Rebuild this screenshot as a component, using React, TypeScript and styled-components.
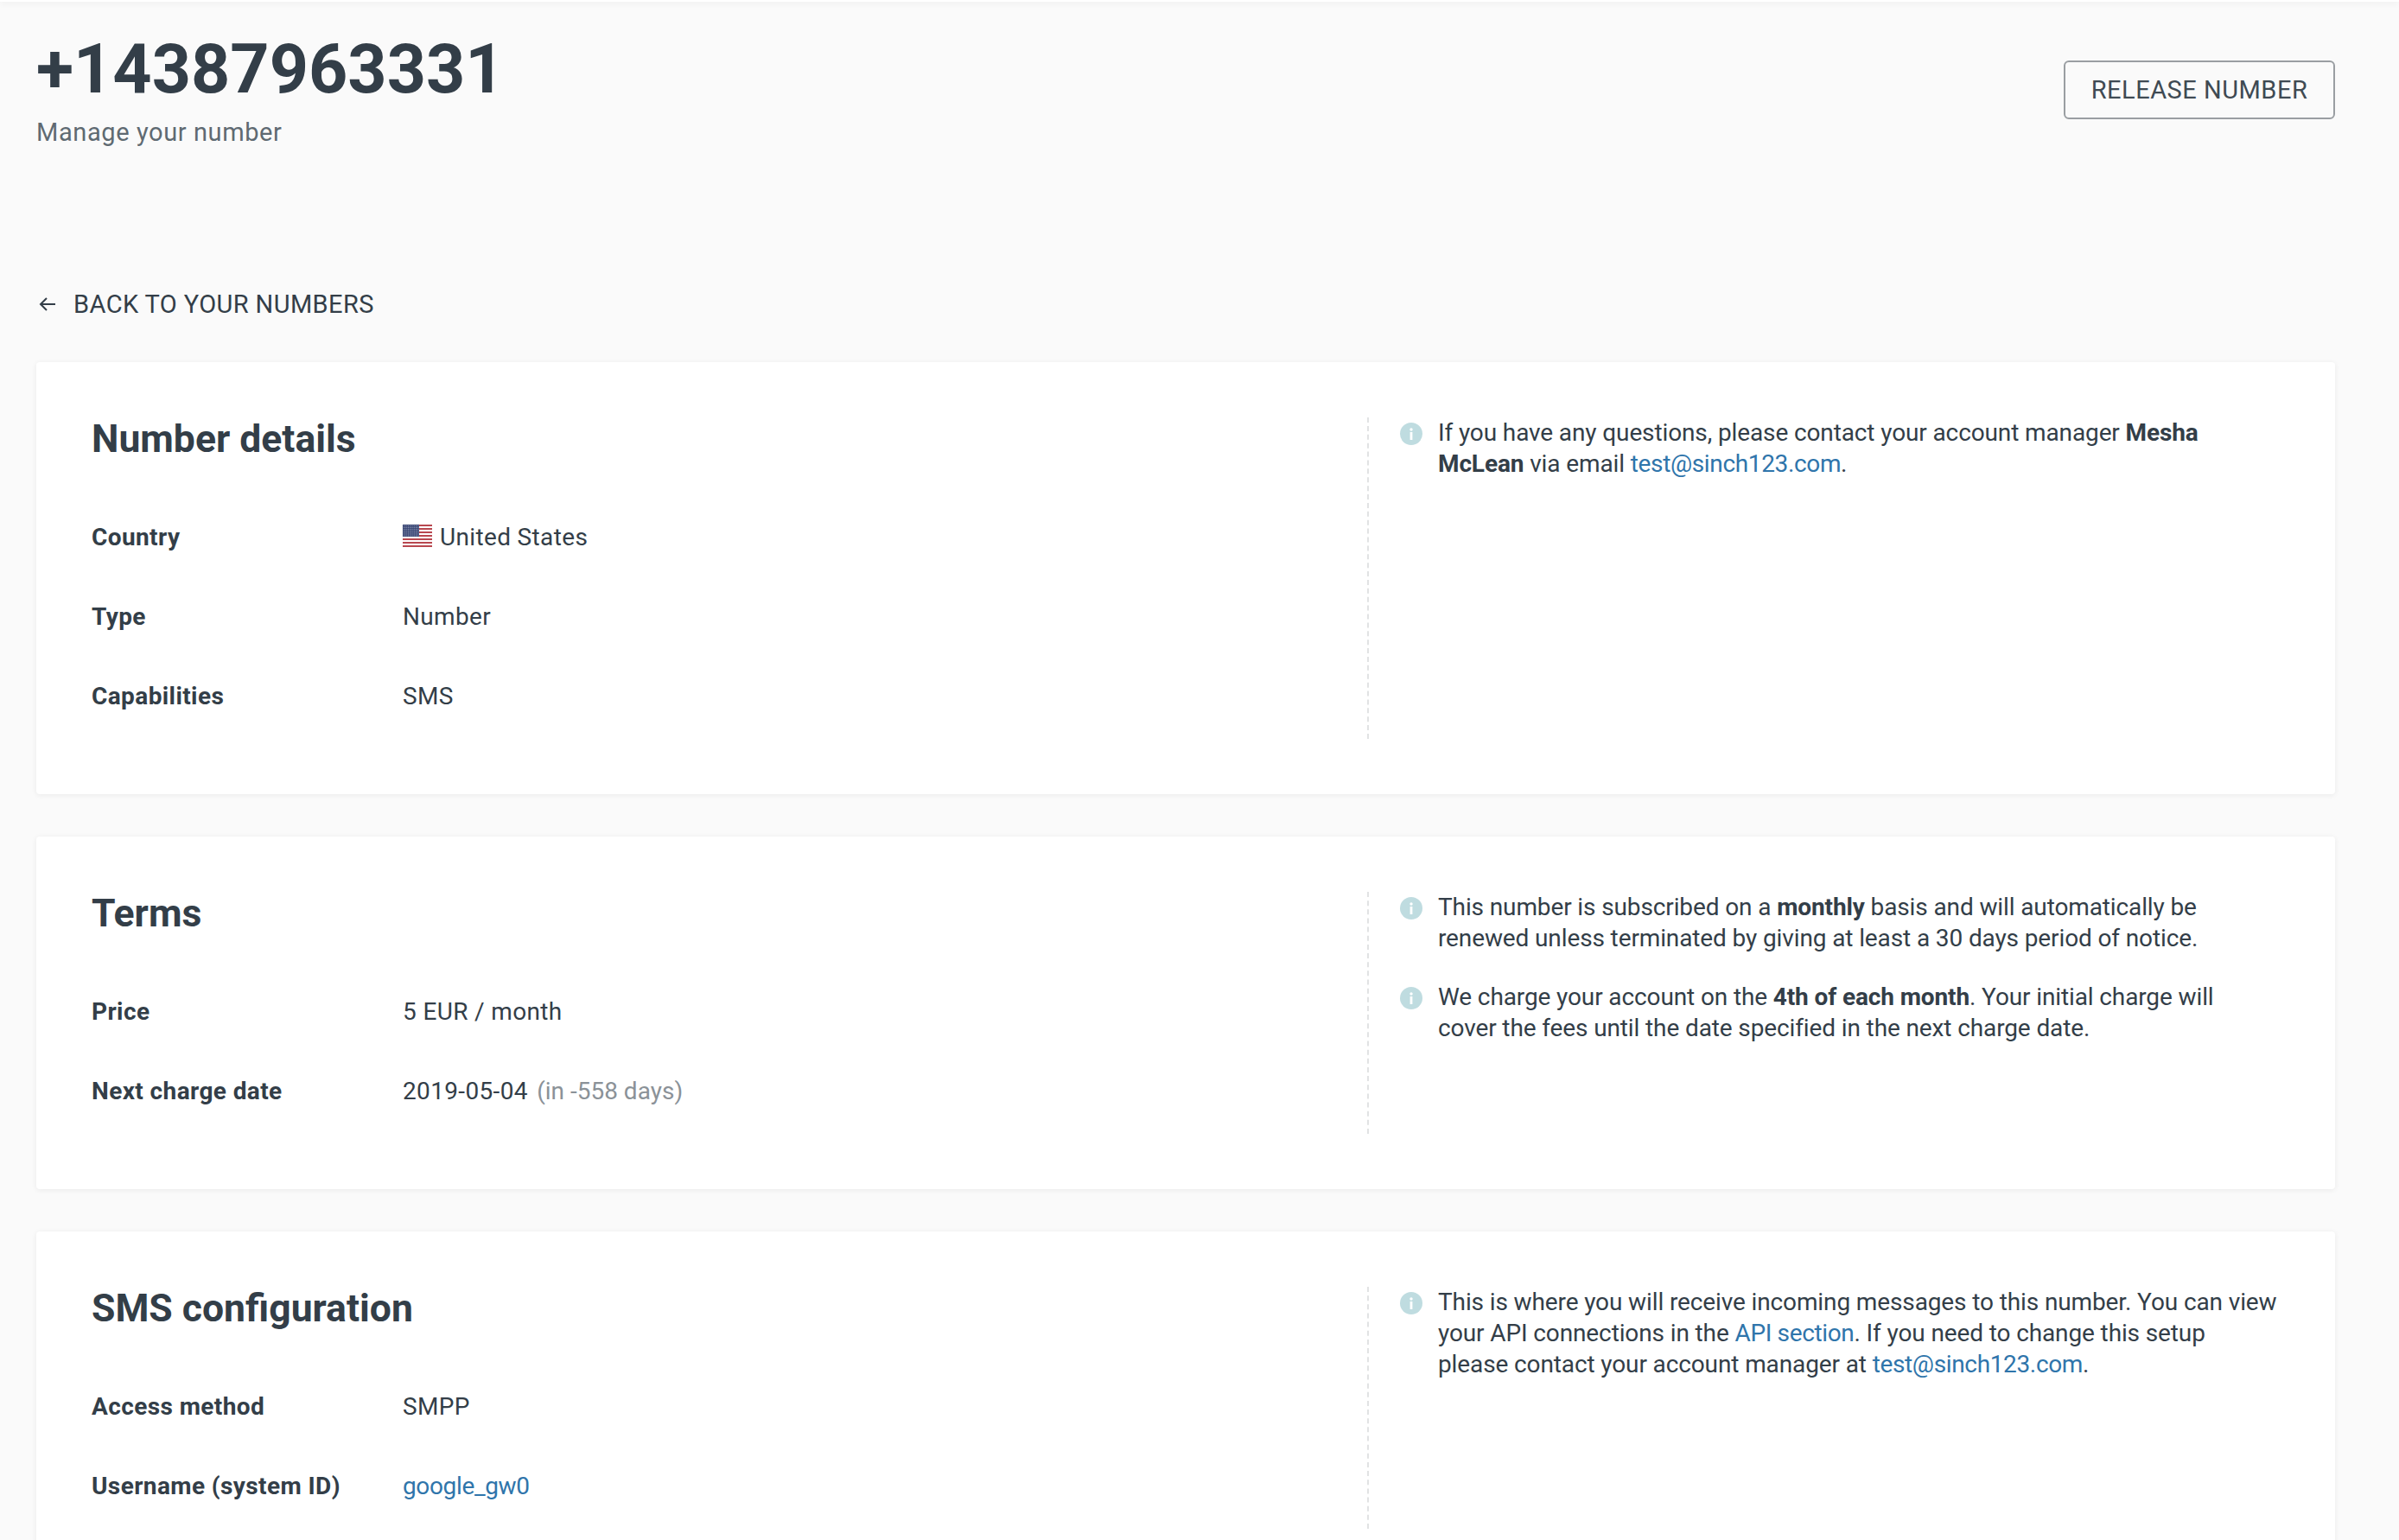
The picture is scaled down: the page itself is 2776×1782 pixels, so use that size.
import { ReactNode } from "react";
import styled, { createGlobalStyle } from "styled-components";

const GlobalStyle = createGlobalStyle`
  html, body {
    margin: 0;
    height: 1782px;
    overflow: hidden;
    background: #fafafa;
  }
  body {
    font-family: Roboto, "Liberation Sans", sans-serif;
    color: #333e48;
  }
`;

function InfoIcon() {
  return (
    <InfoSvg viewBox="0 0 26 26">
      <circle cx="13" cy="13" r="13" fill="#bfdce0" />
      <circle cx="13" cy="8" r="1.7" fill="#fff" />
      <rect x="11.6" y="11" width="2.8" height="9" fill="#fff" />
    </InfoSvg>
  );
}

function UsFlag() {
  const stripes = [0, 2, 4, 6, 8, 10, 12];
  const rows = [0, 1, 2, 3, 4, 5, 6];
  const cols = [0, 1, 2, 3, 4, 5, 6, 7];
  return (
    <FlagSvg viewBox="0 0 34 26">
      <rect width="34" height="26" fill="#fff" />
      {stripes.map((i) => (
        <rect key={i} y={i * 2} width="34" height="2" fill="#b8474f" />
      ))}
      <rect width="19" height="14" fill="#33406f" />
      {rows.map((r) =>
        cols.map((c) => (
          <rect key={`${r}-${c}`} x={1.2 + c * 2.3} y={1 + r * 1.9} width="1" height="1" fill="#b9c0d6" />
        ))
      )}
    </FlagSvg>
  );
}

type DetailRowProps = {
  label: string;
  children: ReactNode;
};

function DetailRow({ label, children }: DetailRowProps) {
  return (
    <Row>
      <RowLabel>{label}</RowLabel>
      <RowValue>{children}</RowValue>
    </Row>
  );
}

function Note({ children }: { children: ReactNode }) {
  return (
    <NoteRow>
      <InfoIcon />
      <NoteText>{children}</NoteText>
    </NoteRow>
  );
}

export default function App() {
  return (
    <Page>
      <GlobalStyle />
      <TopEdge />
      <Content>
        <Header>
          <div>
            <Title>+14387963331</Title>
            <Subtitle>Manage your number</Subtitle>
          </div>
          <ReleaseButton>RELEASE NUMBER</ReleaseButton>
        </Header>

        <BackLink href="#">
          <svg width="20" height="20" viewBox="0 0 20 20" fill="none" stroke="#333e48" strokeWidth="2">
            <path d="M19 10H2M9 3l-7 7 7 7" />
          </svg>
          BACK TO YOUR NUMBERS
        </BackLink>

        <Card>
          <Details>
            <CardTitle>Number details</CardTitle>
            <DetailRow label="Country">
              <UsFlag />
              United States
            </DetailRow>
            <DetailRow label="Type">Number</DetailRow>
            <DetailRow label="Capabilities">SMS</DetailRow>
          </Details>
          <Notes>
            <Note>
              If you have any questions, please contact your account manager <b>Mesha McLean</b> via email{" "}
              <Link href="#">test@sinch123.com</Link>.
            </Note>
          </Notes>
        </Card>

        <Card>
          <Details>
            <CardTitle>Terms</CardTitle>
            <DetailRow label="Price">5 EUR / month</DetailRow>
            <DetailRow label="Next charge date">
              2019-05-04 <Muted>(in -558 days)</Muted>
            </DetailRow>
          </Details>
          <Notes>
            <Note>
              This number is subscribed on a <b>monthly</b> basis and will automatically be renewed unless terminated
              by giving at least a 30 days period of notice.
            </Note>
            <Note>
              We charge your account on the <b>4th of each month</b>. Your initial charge will
              <br />
              cover the fees until the date specified in the next charge date.
            </Note>
          </Notes>
        </Card>

        <Card>
          <Details>
            <CardTitle>SMS configuration</CardTitle>
            <DetailRow label="Access method">SMPP</DetailRow>
            <DetailRow label="Username (system ID)">
              <Link href="#">google_gw0</Link>
            </DetailRow>
          </Details>
          <Notes>
            <Note>
              This is where you will receive incoming messages to this number. You can view your API connections in the{" "}
              <Link href="#">API section</Link>. If you need to change this setup please contact your account manager at{" "}
              <Link href="#">test@sinch123.com</Link>.
            </Note>
          </Notes>
        </Card>
      </Content>
    </Page>
  );
}

const Page = styled.div`
  width: 2776px;
  height: 1782px;
  overflow: hidden;
  background: #fafafa;
`;

const TopEdge = styled.div`
  height: 2px;
  background: #fff;
  box-shadow: 0 2px 6px rgba(0, 0, 0, 0.09);
`;

const Content = styled.main`
  padding: 0 74px 0 42px;
`;

const Header = styled.header`
  display: flex;
  justify-content: space-between;
  align-items: flex-start;
  height: 318px;
  box-sizing: border-box;
  padding-top: 34px;
`;

const Title = styled.h1`
  margin: 0;
  font-size: 79px;
  line-height: 88px;
  font-weight: 700;
  color: #333e48;
`;

const Subtitle = styled.p`
  margin: 12px 0 0;
  font-size: 29px;
  line-height: 34px;
  letter-spacing: 0.6px;
  color: #5f6a72;
`;

const ReleaseButton = styled.button`
  width: 314px;
  height: 68px;
  margin-top: 34px;
  padding: 0;
  border: 2px solid #9a9ea2;
  border-radius: 6px;
  background: transparent;
  font-family: inherit;
  font-size: 29px;
  letter-spacing: 0.5px;
  color: #3f4a53;
`;

const BackLink = styled.a`
  display: flex;
  align-items: center;
  gap: 20px;
  height: 32px;
  margin: 16px 0 51px;
  padding-left: 3px;
  font-size: 29px;
  letter-spacing: 0.4px;
  color: #333e48;
  text-decoration: none;
`;

const Card = styled.section`
  display: grid;
  grid-template-columns: 1476px 1fr;
  margin-bottom: 49px;
  padding: 64px;
  background: #fff;
  border-radius: 4px;
  box-shadow: 0 1px 6px rgba(0, 0, 0, 0.07);
`;

const Details = styled.div`
  min-width: 0;
  padding-bottom: 4px;
`;

const CardTitle = styled.h2`
  margin: 0;
  height: 92px;
  font-size: 44.5px;
  line-height: 50px;
  font-weight: 700;
  color: #333e48;
`;

const Row = styled.div`
  display: grid;
  grid-template-columns: 360px 1fr;
  align-items: center;
  height: 92px;
  font-size: 28px;
`;

const RowLabel = styled.div`
  font-weight: 700;
  letter-spacing: 0.4px;
`;

const RowValue = styled.div`
  letter-spacing: 0.35px;
`;

const Muted = styled.span`
  margin-left: 3px;
  letter-spacing: 0;
  color: #8b9298;
`;

const Link = styled.a`
  color: #2f75ab;
  letter-spacing: -0.35px;
  text-decoration: none;
`;

const Notes = styled.aside`
  display: flex;
  flex-direction: column;
  gap: 32px;
  padding-left: 36px;
  border-left: 2px dashed #e1e3e4;
`;

const NoteRow = styled.div`
  display: flex;
  gap: 18px;
`;

const NoteText = styled.p`
  margin: 0;
  font-size: 28px;
  line-height: 36px;
  letter-spacing: -0.12px;

  b {
    font-weight: 700;
  }
`;

const InfoSvg = styled.svg`
  flex: none;
  width: 26px;
  height: 26px;
  margin-top: 6px;
`;

const FlagSvg = styled.svg`
  width: 34px;
  height: 26px;
  margin-right: 9px;
  vertical-align: -2px;
`;
